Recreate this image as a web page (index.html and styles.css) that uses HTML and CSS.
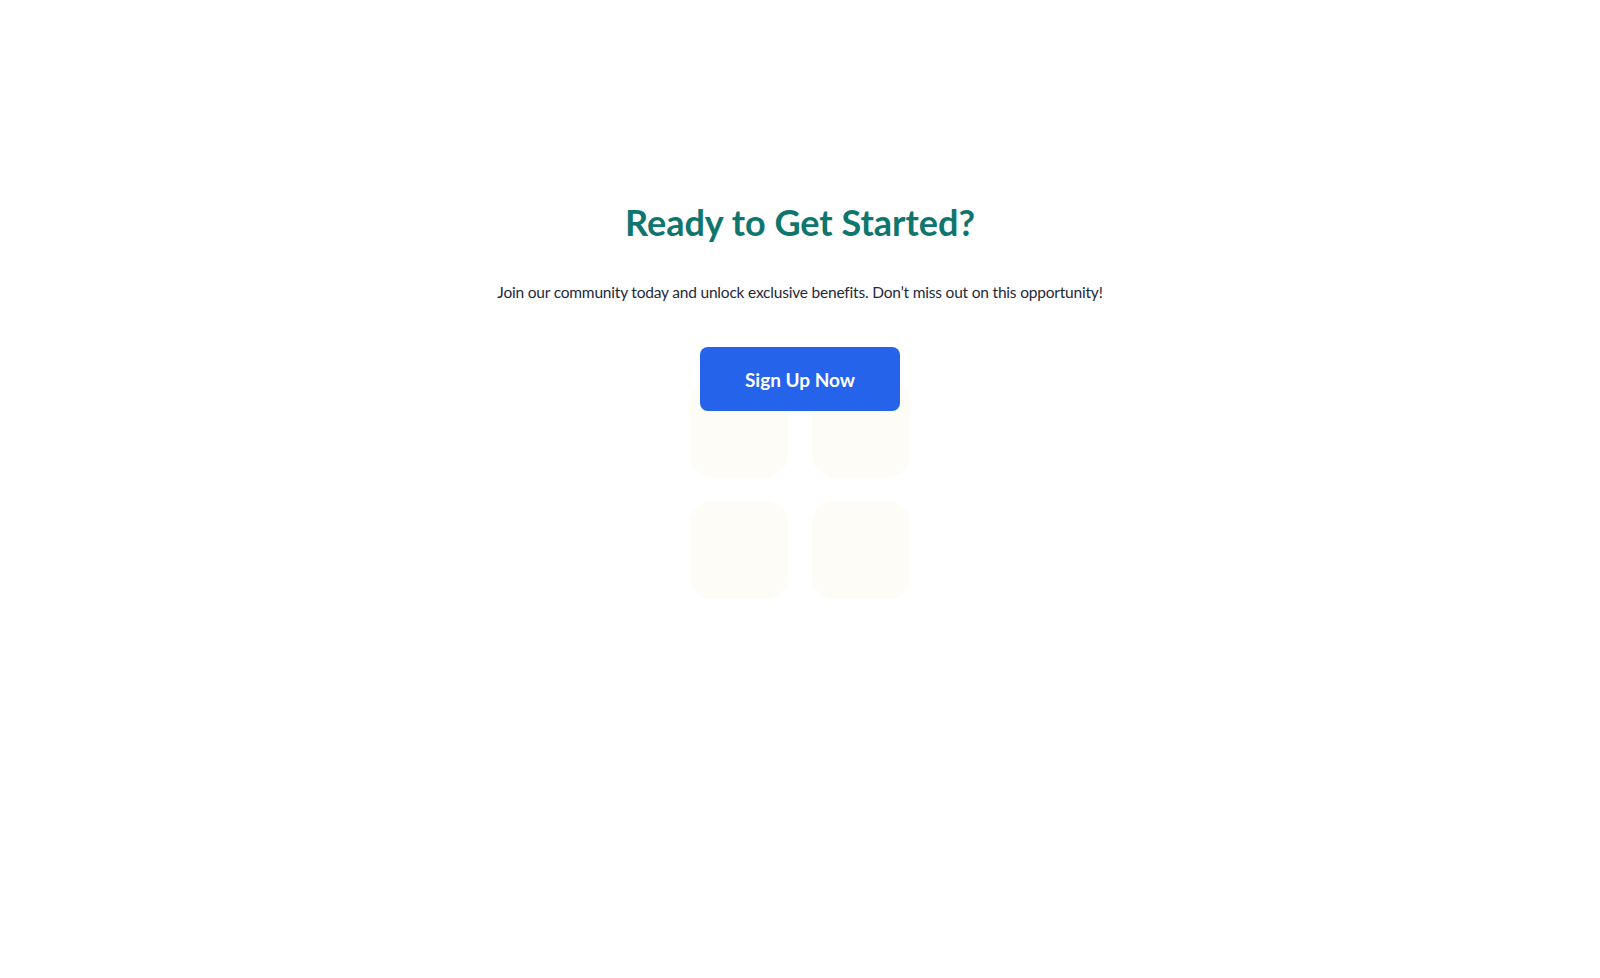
FILE: index.html
```html
<!DOCTYPE html>
<html lang="en">
<head>
<meta charset="utf-8">
<title>Ready to Get Started?</title>
<link rel="stylesheet" href="styles.css">
</head>
<body>
<section class="cta">
  <h1 class="cta-title">Ready to Get Started?</h1>
  <p class="cta-text">Join our community today and unlock exclusive benefits. Don’t miss out on this opportunity!</p>
  <div class="cta-action">
    <button class="cta-button" type="button">Sign Up Now</button>
    <div class="tiles" aria-hidden="true">
      <div class="tile"></div>
      <div class="tile"></div>
      <div class="tile"></div>
      <div class="tile"></div>
    </div>
  </div>
</section>
</body>
</html>
```

FILE: styles.css
```css
html, body {
  margin: 0;
  padding: 0;
  background: #ffffff;
}

body {
  font-family: "Lato", "Noto Sans", sans-serif;
  color: #1f2937;
}

.cta {
  display: flex;
  flex-direction: column;
  align-items: center;
  padding-top: 202px;
}

.cta-title {
  margin: 0;
  font-size: 36px;
  line-height: 40px;
  font-weight: 700;
  color: #0f766e;
}

.cta-text {
  margin: 38px 0 0;
  font-size: 15.5px;
  line-height: 24px;
  letter-spacing: -0.2px;
  color: #1e293b;
}

.cta-action {
  margin-top: 43px;
  display: flex;
  flex-direction: column;
  align-items: center;
}

.cta-button {
  position: relative;
  z-index: 1;
  width: 200px;
  height: 64px;
  border: none;
  border-radius: 8px;
  background: #2563eb;
  color: #ffffff;
  font-family: inherit;
  font-size: 19px;
  font-weight: 700;
  cursor: pointer;
}

.tiles {
  margin-top: -32px;
  display: grid;
  grid-template-columns: repeat(2, 98px);
  grid-template-rows: repeat(2, 98px);
  gap: 24px;
}

.tile {
  background: #fdfcf6;
  border-radius: 22px;
}
```
